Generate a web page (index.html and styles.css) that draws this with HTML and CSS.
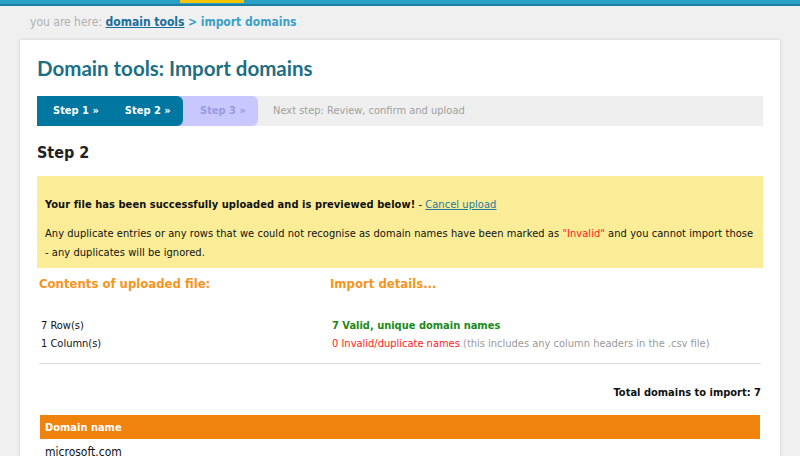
FILE: index.html
```html
<!DOCTYPE html>
<html lang="en">
<head>
    <title>Domain tools: Import domains</title>
    <meta http-equiv="content-type" content="text/html; charset=utf-8" />
    <link rel="stylesheet" href="styles.css">
</head>
<body>
    <div class="topbar"><span class="toptab"></span></div>

    <div class="crumbs">
        you are here: <a href="#" class="crumb-link">domain tools</a> <span class="crumb-cur">&gt; import domains</span>
    </div>

    <div class="card">
        <h1 class="title">Domain tools: Import domains</h1>

        <div class="steps">
            <div class="step-done">
                <span>Step 1 &raquo;</span>
                <span>Step 2 &raquo;</span>
            </div>
            <div class="step-next">Step 3 &raquo;</div>
            <div class="step-info">Next step: Review, confirm and upload</div>
        </div>

        <h2 class="subtitle">Step 2</h2>

        <div class="notice">
            <p><b>Your file has been successfully uploaded and is previewed below!</b> - <a href="#" class="cancel">Cancel upload</a></p>
            <p>Any duplicate entries or any rows that we could not recognise as domain names have been marked as <span class="red">"Invalid"</span> and you cannot import those<br>- any duplicates will be ignored.</p>
        </div>

        <div class="details">
            <div class="col-left">
                <h3 class="orange">Contents of uploaded file:</h3>
                <div class="lines">
                    7 Row(s)<br>
                    1 Column(s)
                </div>
            </div>
            <div class="col-right">
                <h3 class="orange">Import details...</h3>
                <div class="lines">
                    <b class="green">7 Valid, unique domain names</b><br>
                    <span class="red">0 Invalid/duplicate names</span> <span class="grey">(this includes any column headers in the .csv file)</span>
                </div>
            </div>
        </div>

        <hr class="sep">

        <div class="total">Total domains to import: 7</div>

        <table class="domains">
            <thead>
                <tr><th>Domain name</th></tr>
            </thead>
            <tbody>
                <tr><td>microsoft.com</td></tr>
                <tr><td>google.com</td></tr>
            </tbody>
        </table>
    </div>
</body>
</html>
```

FILE: styles.css
```css
body {
    margin: 0;
    background-color: #f0f0f0;
    font-family: "DejaVu Sans Condensed", "DejaVu Sans", sans-serif;
    font-size: 11px;
    color: #111;
    overflow: hidden;
}

.topbar {
    height: 4px;
    background-color: #2aa0c6;
    border-bottom: 2px solid #1b7f9f;
    padding-left: 180px;
}

.toptab {
    display: block;
    width: 64px;
    height: 3px;
    background-color: #f5c300;
}

.crumbs {
    padding: 9px 0 0 30px;
    height: 25px;
    font-size: 12px;
    color: #b0b0b0;
}

.crumb-link {
    color: #1a6d9a;
    font-weight: bold;
}

.crumb-cur {
    color: #3aa0c8;
    font-weight: bold;
}

.card {
    margin: 0 20px;
    background-color: #fff;
    box-shadow: 0 0 3px #c8c8c8;
    padding: 14px 17px 0 17px;
    height: 500px;
}

.title {
    margin: 0;
    font-family: Lato, sans-serif;
    font-weight: bold;
    font-size: 20.5px;
    color: #1d6f86;
    height: 42px;
    line-height: 29px;
}

.steps {
    display: flex;
    height: 30px;
    background-color: #efefef;
    font-size: 11px;
    font-weight: bold;
    line-height: 30px;
}

.step-done {
    background-color: #0077a0;
    color: #fff;
    border-radius: 0 6px 6px 0;
    padding-left: 16px;
    width: 130px;
    display: flex;
    gap: 26px;
    position: relative;
    z-index: 1;
}

.step-next {
    background-color: #c8c8ff;
    color: #9a9ae0;
    border-radius: 0 6px 6px 0;
    margin-left: -8px;
    padding-left: 25px;
    width: 58px;
}

.step-info {
    color: #a0a0a0;
    font-weight: normal;
    padding-left: 15px;
}

.subtitle {
    margin: 0;
    padding-top: 17px;
    height: 33px;
    font-size: 16px;
    color: #222;
}

.notice {
    background-color: #fbec98;
    padding: 19px 8px 6px 8px;
    line-height: 19px;
    letter-spacing: 0.06px;
}

.notice p {
    margin: 0 0 10px 0;
}

.notice p:last-child {
    margin: 0;
}

.cancel {
    color: #1a7aa0;
}

.red {
    color: #ff2222;
}

.green {
    color: #1a8a1a;
}

.grey {
    color: #9a9a9a;
}

.details {
    display: flex;
    padding: 8px 2px 0 2px;
}

.col-left {
    width: 291px;
}

.col-right {
    flex: 1;
}

.orange {
    margin: 0;
    height: 41px;
    font-size: 13px;
    color: #f7941d;
}

.lines {
    padding-left: 2px;
    line-height: 18px;
}

.sep {
    margin: 10px 2px 0 2px;
    border: 0;
    border-top: 1px solid #dcdcdc;
}

.total {
    text-align: right;
    font-weight: bold;
    padding: 22px 2px 0 0;
    height: 29px;
}

.domains {
    width: 720px;
    margin-left: 3px;
    border-collapse: collapse;
}

.domains th {
    background-color: #f0820e;
    color: #fff;
    text-align: left;
    height: 24px;
    padding: 0 5px;
}

.domains td {
    padding: 6px 5px 4px 5px;
    font-size: 12px;
}
```
